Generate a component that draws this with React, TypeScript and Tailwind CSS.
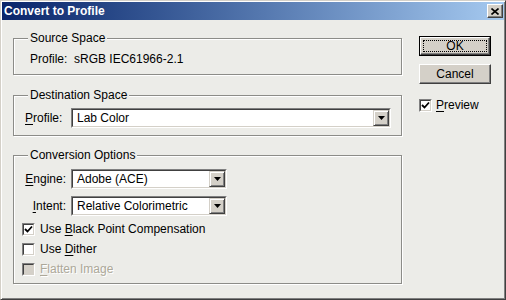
import React from "react";

const face = "bg-[#ecece8]";

const CheckMark: React.FC<{ color?: string }> = ({ color = "#000" }) => (
  <svg width="9" height="9" viewBox="0 0 9 9">
    <path d="M1 4 L3.5 6.5 L8 1.5" fill="none" stroke={color} strokeWidth="1.8" />
  </svg>
);

const CheckBox: React.FC<{ checked?: boolean; disabled?: boolean }> = ({ checked, disabled }) => (
  <div className="h-[13px] w-[13px] shrink-0 border border-t-[#808080] border-l-[#808080] border-r-white border-b-white">
    <div
      className={`flex h-full w-full items-center justify-center border border-t-[#404040] border-l-[#404040] border-r-[#d4d0c8] border-b-[#d4d0c8] ${
        disabled ? "bg-[#d4d0c8]" : "bg-white"
      }`}
    >
      {checked && <CheckMark />}
    </div>
  </div>
);

const Select: React.FC<{ value: string; width: string }> = ({ value, width }) => (
  <div className={`flex h-[20px] ${width} border border-t-[#808080] border-l-[#808080] border-r-white border-b-white`}>
    <div className="flex flex-1 border border-t-[#404040] border-l-[#404040] border-r-[#d4d0c8] border-b-[#d4d0c8] bg-white">
      <div className="flex flex-1 items-center pl-[4px] leading-[14px]">{value}</div>
      <div className="flex h-[16px] w-[16px] items-center justify-center border border-t-[#d4d0c8] border-l-[#d4d0c8] border-r-[#404040] border-b-[#404040] bg-[#d4d0c8] shadow-[inset_1px_1px_0_#fff,inset_-1px_-1px_0_#808080]">
        <svg width="7" height="4" viewBox="0 0 7 4">
          <path d="M0 0 H7 L3.5 4 Z" fill="#000" />
        </svg>
      </div>
    </div>
  </div>
);

const Group: React.FC<{ title: string; className: string; children: React.ReactNode }> = ({
  title,
  className,
  children,
}) => (
  <div className={`border border-[#8c8c88] shadow-[inset_1px_1px_0_#fff,1px_1px_0_#fff] ${className}`}>
    <div className={`-mt-[7px] ml-[14px] w-fit px-[2px] leading-[13px] ${face}`}>{title}</div>
    {children}
  </div>
);

const U: React.FC<{ children: React.ReactNode }> = ({ children }) => (
  <span className="underline underline-offset-[2px]">{children}</span>
);

export default function App() {
  return (
    <div
      className={`h-[300px] w-[506px] overflow-hidden border border-t-[#d4d0c8] border-l-[#d4d0c8] border-r-[#404040] border-b-[#404040] p-[1px] shadow-[inset_1px_1px_0_#fff,inset_-1px_-1px_0_#808080] ${face} font-['Liberation_Sans',Arial,sans-serif] text-[12px] text-black`}
    >
      {/* title bar */}
      <div className="flex h-[18px] items-center justify-between bg-gradient-to-r from-[#0a246a] to-[#a6caf0] pl-[2px] pr-[1px]">
        <span className="text-[12px] font-bold leading-[14px] text-white">Convert to Profile</span>
        <div className="flex h-[14px] w-[16px] items-center justify-center border border-t-white border-l-white border-r-[#404040] border-b-[#404040] bg-[#d4d0c8] shadow-[inset_-1px_-1px_0_#808080]">
          <svg width="8" height="7" viewBox="0 0 8 7">
            <path d="M0.5 0.5 L7.5 6.5 M7.5 0.5 L0.5 6.5" stroke="#000" strokeWidth="1.6" />
          </svg>
        </div>
      </div>

      <div className="flex pl-[11px]">
        {/* left column */}
        <div className="flex w-[389px] flex-col">
          <Group title="Source Space" className="mt-[18px] h-[37px]">
            <div className="ml-[16px] mt-[7px] flex leading-[14px]">
              <span className="w-[44px]">Profile:</span>
              <span>sRGB IEC61966-2.1</span>
            </div>
          </Group>

          <Group title="Destination Space" className="mt-[20px] h-[41px]">
            <div className="ml-[11px] mt-[6px] flex items-center">
              <span className="w-[46px]">
                <U>P</U>rofile:
              </span>
              <Select value="Lab Color" width="w-[320px]" />
            </div>
          </Group>

          <Group title="Conversion Options" className="mt-[19px] h-[129px]">
            <div className="mt-[7px] flex flex-col gap-[7px]">
              <div className="flex items-center">
                <span className="w-[57px] pr-[5px] text-right">
                  <U>E</U>ngine:
                </span>
                <Select value="Adobe (ACE)" width="w-[156px]" />
              </div>
              <div className="flex items-center">
                <span className="w-[57px] pr-[5px] text-right">
                  <U>I</U>ntent:
                </span>
                <Select value="Relative Colorimetric" width="w-[156px]" />
              </div>
              <div className="ml-[8px] flex h-[13px] items-center gap-[5px] leading-[13px]">
                <CheckBox checked />
                <span>
                  Use <U>B</U>lack Point Compensation
                </span>
              </div>
              <div className="ml-[8px] flex h-[13px] items-center gap-[5px] leading-[13px]">
                <CheckBox />
                <span>
                  Use <U>D</U>ither
                </span>
              </div>
              <div className="ml-[8px] flex h-[13px] items-center gap-[5px] leading-[13px]">
                <CheckBox disabled />
                <span className="text-[#aca899] [text-shadow:1px_1px_0_#fff]">
                  <U>F</U>latten Image
                </span>
              </div>
            </div>
          </Group>
        </div>

        {/* right column */}
        <div className="ml-[17px] flex w-[72px] flex-col">
          <div className="mt-[16px] h-[20px] border border-black">
            <div className="flex h-full w-full border border-t-white border-l-white border-r-[#404040] border-b-[#404040] bg-[#d4d0c8] p-[2px] shadow-[inset_-1px_-1px_0_#808080]">
              <div className="flex flex-1 items-center justify-center border border-dotted border-black leading-[12px]">
                OK
              </div>
            </div>
          </div>
          <div className="mt-[8px] flex h-[20px] items-center justify-center border border-t-white border-l-white border-r-[#404040] border-b-[#404040] bg-[#d4d0c8] shadow-[inset_-1px_-1px_0_#808080]">
            Cancel
          </div>
          <div className="mt-[15px] flex h-[13px] items-center gap-[4px] leading-[13px]">
            <CheckBox checked />
            <span>
              <U>P</U>review
            </span>
          </div>
        </div>
      </div>
    </div>
  );
}
